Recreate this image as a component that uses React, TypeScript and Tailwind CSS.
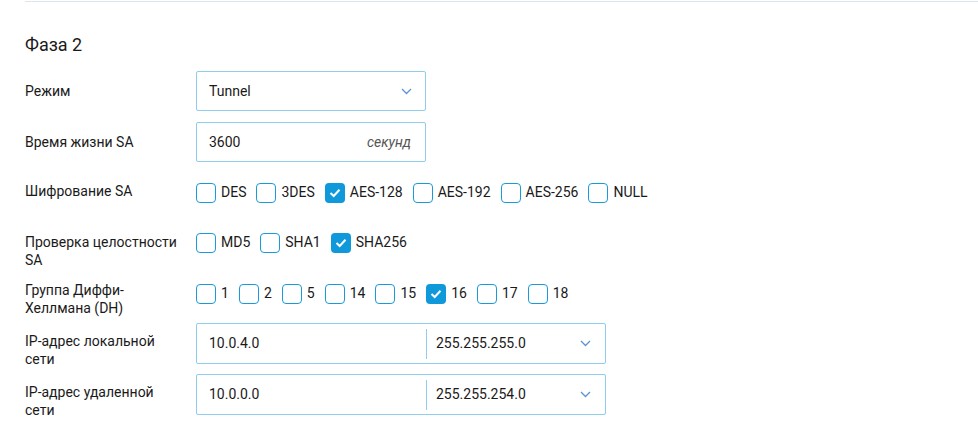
import React from 'react'

const font = { fontFamily: 'Roboto, "Liberation Sans", sans-serif' }

function Chevron() {
  return (
    <svg width="11" height="7" viewBox="0 0 11 7" className="shrink-0">
      <path d="M1 1 L5.5 5.5 L10 1" fill="none" stroke="#5b93d3" strokeWidth="1.3" />
    </svg>
  )
}

function Box({ label, checked }: { label: string; checked?: boolean }) {
  return (
    <div className="flex items-center mr-[10px]">
      {checked ? (
        <div className="w-5 h-5 rounded-[4px] bg-[#0f98da] flex items-center justify-center">
          <svg width="12" height="10" viewBox="0 0 12 10">
            <path d="M1.5 5 L4.7 8 L10.5 1.8" fill="none" stroke="white" strokeWidth="2" />
          </svg>
        </div>
      ) : (
        <div className="w-5 h-5 rounded-[4px] border-[1.5px] border-[#1a9ad8] bg-white" />
      )}
      <span className="ml-[5px] text-[14px] text-[#1a1a1a]">{label}</span>
    </div>
  )
}

export default function App() {
  return (
    <div className="w-[978px] h-[422px] bg-white overflow-hidden pl-[25px]" style={font}>
      <div className="h-px mt-px bg-[#dde6ec]" />

      <h2 className="mt-[31px] text-[18px] leading-6 text-[#1a1a1a]">Фаза 2</h2>

      {/* Режим */}
      <div className="flex items-center mt-[14px]">
        <div className="w-[171px] text-[14px] text-[#1a1a1a]">Режим</div>
        <div className="w-[230px] h-10 border border-[#8fcdec] rounded-[2px] flex items-center justify-between pl-3 pr-[13px]">
          <span className="text-[14px] text-[#1a1a1a]">Tunnel</span>
          <Chevron />
        </div>
      </div>

      {/* Время жизни */}
      <div className="flex items-center mt-[11px]">
        <div className="w-[171px] text-[14px] text-[#1a1a1a]">Время жизни SA</div>
        <div className="w-[230px] h-10 border border-[#8fcdec] rounded-[2px] flex items-center justify-between pl-3 pr-[14px]">
          <span className="text-[14px] text-[#1a1a1a]">3600</span>
          <span className="text-[14px] italic text-[#555]">секунд</span>
        </div>
      </div>

      {/* Шифрование */}
      <div className="flex items-start mt-5">
        <div className="w-[171px] text-[14px] leading-[18px] text-[#1a1a1a]">Шифрование SA</div>
        <div className="flex">
          <Box label="DES" />
          <Box label="3DES" />
          <Box label="AES-128" checked />
          <Box label="AES-192" />
          <Box label="AES-256" />
          <Box label="NULL" />
        </div>
      </div>

      {/* Проверка */}
      <div className="flex items-start mt-[29px]">
        <div className="w-[171px] pt-px text-[14px] leading-[18px] text-[#1a1a1a]">
          Проверка целостности<br />SA
        </div>
        <div className="flex">
          <Box label="MD5" />
          <Box label="SHA1" />
          <Box label="SHA256" checked />
        </div>
      </div>

      {/* DH */}
      <div className="flex items-start mt-[12px]">
        <div className="w-[171px] text-[14px] leading-[18px] text-[#1a1a1a]">
          Группа Диффи-<br />Хеллмана (DH)
        </div>
        <div className="flex mt-[2px]">
          {['1', '2', '5', '14', '15', '16', '17', '18'].map((n) => (
            <Box key={n} label={n} checked={n === '16'} />
          ))}
        </div>
      </div>

      {/* IP addresses */}
      {[
        { l1: 'IP-адрес локальной', ip: '10.0.4.0', mask: '255.255.255.0', mt: 'mt-[6px]' },
        { l1: 'IP-адрес удаленной', ip: '10.0.0.0', mask: '255.255.254.0', mt: 'mt-[10px]' },
      ].map((r) => (
        <div key={r.ip} className={`flex items-start h-[41px] ${r.mt}`}>
          <div className="w-[171px] pt-[9px] text-[14px] leading-[18px] text-[#1a1a1a]">
            {r.l1}<br />сети
          </div>
          <div className="w-[410px] h-[41px] border border-[#8fcdec] rounded-[2px] flex items-center">
            <div className="w-[229px] pl-3 text-[14px] text-[#1a1a1a]">{r.ip}</div>
            <div className="w-px h-[30px] bg-[#8fcdec]" />
            <div className="flex-1 flex items-center justify-between pl-[9px] pr-[14px]">
              <span className="text-[14px] text-[#1a1a1a]">{r.mask}</span>
              <Chevron />
            </div>
          </div>
        </div>
      ))}
    </div>
  )
}
